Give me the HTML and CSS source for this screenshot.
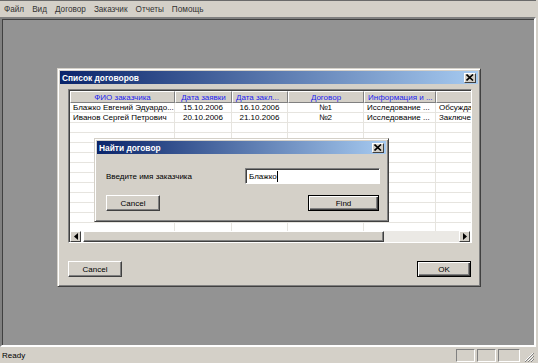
FILE: index.html
```html
<!DOCTYPE html>
<html lang="ru">
<head>
    <meta charset="UTF-8">
    <title>Договоры</title>
    <link rel="stylesheet" href="styles.css">
</head>
<body>
    <div class="app">
        <div class="topline"></div>
        <!-- Menu -->
        <ul class="menubar">
            <li>Файл</li>
            <li>Вид</li>
            <li>Договор</li>
            <li>Заказчик</li>
            <li>Отчеты</li>
            <li>Помощь</li>
        </ul>

        <!-- MDI client area -->
        <div class="client">
            <div class="window list-window">
                <div class="titlebar">
                    <span>Список договоров</span>
                    <span class="close-btn"><svg width="8" height="7" viewBox="0 0 8 7"><path d="M0.5 0.5 L7 6.5 M7 0.5 L0.5 6.5" stroke="#000" stroke-width="1.6"/></svg></span>
                </div>
                <div class="list-body">
                    <div class="listview">
                        <div class="grid">
                            <div class="row head">
                                <div class="cell c">ФИО заказчика</div>
                                <div class="cell c">Дата заявки</div>
                                <div class="cell">Дата закл...</div>
                                <div class="cell c">Договор</div>
                                <div class="cell">Информация и ...</div>
                                <div class="cell"></div>
                            </div>
                            <div class="row">
                                <div class="cell">Блажко Евгений Эдуардо...</div>
                                <div class="cell c">15.10.2006</div>
                                <div class="cell c">16.10.2006</div>
                                <div class="cell c">№1</div>
                                <div class="cell">Исследование ...</div>
                                <div class="cell">Обсужда</div>
                            </div>
                            <div class="row">
                                <div class="cell">Иванов Сергей Петрович</div>
                                <div class="cell c">20.10.2006</div>
                                <div class="cell c">21.10.2006</div>
                                <div class="cell c">№2</div>
                                <div class="cell">Исследование ...</div>
                                <div class="cell">Заключе</div>
                            </div>
                            <div class="row"><div class="cell"></div><div class="cell"></div><div class="cell"></div><div class="cell"></div><div class="cell"></div><div class="cell"></div></div>
                            <div class="row"><div class="cell"></div><div class="cell"></div><div class="cell"></div><div class="cell"></div><div class="cell"></div><div class="cell"></div></div>
                            <div class="row"><div class="cell"></div><div class="cell"></div><div class="cell"></div><div class="cell"></div><div class="cell"></div><div class="cell"></div></div>
                            <div class="row"><div class="cell"></div><div class="cell"></div><div class="cell"></div><div class="cell"></div><div class="cell"></div><div class="cell"></div></div>
                            <div class="row"><div class="cell"></div><div class="cell"></div><div class="cell"></div><div class="cell"></div><div class="cell"></div><div class="cell"></div></div>
                            <div class="row"><div class="cell"></div><div class="cell"></div><div class="cell"></div><div class="cell"></div><div class="cell"></div><div class="cell"></div></div>
                            <div class="row"><div class="cell"></div><div class="cell"></div><div class="cell"></div><div class="cell"></div><div class="cell"></div><div class="cell"></div></div>
                            <div class="row"><div class="cell"></div><div class="cell"></div><div class="cell"></div><div class="cell"></div><div class="cell"></div><div class="cell"></div></div>
                            <div class="row"><div class="cell"></div><div class="cell"></div><div class="cell"></div><div class="cell"></div><div class="cell"></div><div class="cell"></div></div>
                            <div class="row"><div class="cell"></div><div class="cell"></div><div class="cell"></div><div class="cell"></div><div class="cell"></div><div class="cell"></div></div>
                            <div class="row"><div class="cell"></div><div class="cell"></div><div class="cell"></div><div class="cell"></div><div class="cell"></div><div class="cell"></div></div>
                        </div>
                        <div class="hscroll">
                            <span class="arrow"><svg width="4" height="7" viewBox="0 0 4 7"><path d="M4 0 L0 3.5 L4 7 Z" fill="#000"/></svg></span>
                            <span class="thumb"></span>
                            <span class="track"></span>
                            <span class="arrow"><svg width="4" height="7" viewBox="0 0 4 7"><path d="M0 0 L4 3.5 L0 7 Z" fill="#000"/></svg></span>
                        </div>
                    </div>
                    <div class="buttons">
                        <button class="btn">Cancel</button>
                        <button class="btn default">OK</button>
                    </div>
                </div>
            </div>

            <div class="window find-window">
                <div class="titlebar">
                    <span>Найти договор</span>
                    <span class="close-btn"><svg width="8" height="7" viewBox="0 0 8 7"><path d="M0.5 0.5 L7 6.5 M7 0.5 L0.5 6.5" stroke="#000" stroke-width="1.6"/></svg></span>
                </div>
                <div class="find-body">
                    <div class="find-row">
                        <label for="customer">Введите имя заказчика</label>
                        <div class="textbox" id="customer">Блажко<span class="caret"></span></div>
                    </div>
                    <div class="buttons">
                        <button class="btn">Cancel</button>
                        <button class="btn default wide">Find</button>
                    </div>
                </div>
            </div>
        </div>

        <!-- Status bar -->
        <div class="statusbar">
            <span class="status-text">Ready</span>
            <span class="panel"></span>
            <span class="panel"></span>
            <span class="panel wide"></span>
            <svg class="grip" width="10" height="10" viewBox="0 0 10 10">
                <path d="M9 1 L1 9 M9 4 L4 9 M9 7 L7 9" stroke="#fff" stroke-width="1"/>
                <path d="M10 1 L1 10 M10 4 L4 10 M10 7 L7 10" stroke="#808080" stroke-width="1"/>
            </svg>
        </div>
    </div>
</body>
</html>
```

FILE: styles.css
```css
* {
    margin: 0;
    padding: 0;
    box-sizing: border-box;
}

body {
    font-family: "Liberation Sans", Arial, sans-serif;
    font-size: 8px;
    color: #000;
    background-color: #d4d0c8;
    overflow: hidden;
}

.app {
    width: 539px;
    height: 363px;
    display: flex;
    flex-direction: column;
    padding-right: 2px;
    border-right: 1px solid #fff;
}

.topline {
    height: 1px;
    background-color: #6a6a6a;
}

/* Menu */
.menubar {
    list-style: none;
    display: flex;
    height: 16px;
    align-items: center;
    padding-left: 4px;
    font-size: 8.2px;
    color: #333;
}

.menubar li {
    margin-right: 8px;
}

/* MDI area */
.client {
    position: relative;
    height: 330px;
    background-color: #939393;
    border: 2px solid;
    border-color: #808080 #fff #fff #808080;
    box-shadow: inset 1px 1px #404040;
}

/* Windows */
.window {
    position: absolute;
    background-color: #d4d0c8;
    border: 1px solid;
    border-color: #d4d0c8 #404040 #404040 #d4d0c8;
    box-shadow: inset 1px 1px #fff, inset -1px -1px #808080;
    padding: 2px;
}

.list-window {
    left: 55px;
    top: 49px;
    width: 424px;
    height: 219px;
}

.find-window {
    left: 92px;
    top: 119px;
    width: 295px;
    height: 84px;
}

.titlebar {
    height: 13px;
    display: flex;
    align-items: center;
    justify-content: space-between;
    padding: 0 2px 0 2px;
    background: linear-gradient(to right, #0a246a, #a6caf0);
    color: #fff;
    font-weight: bold;
    font-size: 8.4px;
}

.close-btn {
    width: 12px;
    height: 10px;
    display: flex;
    align-items: center;
    justify-content: center;
    background-color: #d4d0c8;
    border: 1px solid;
    border-color: #fff #404040 #404040 #fff;
}

/* List window content */
.list-body {
    padding: 5px 6px 0 8px;
}

.listview {
    height: 154px;
    background-color: #fff;
    border: 1px solid;
    border-color: #808080 #fff #fff #808080;
    box-shadow: inset 1px 1px #404040;
    padding: 1px 0 0 1px;
    display: flex;
    flex-direction: column;
    overflow: hidden;
}

.grid {
    flex: 1;
    overflow: hidden;
}

.row {
    display: grid;
    grid-template-columns: 105px 57px 56px 76px 72px 40px;
    height: 10px;
    line-height: 10px;
}

.row .cell {
    border-right: 1px solid #e6e4df;
    border-bottom: 1px solid #e6e4df;
    padding: 0 3px;
    white-space: nowrap;
    overflow: hidden;
}

.row .cell.c {
    text-align: center;
}

.row.head {
    height: 12px;
    line-height: 11px;
    color: #1c1cf0;
    background-color: #d4d0c8;
}

.row.head .cell {
    border-top: 1px solid #fff;
    border-left: 1px solid #fff;
    border-right: 1px solid #808080;
    border-bottom: 1px solid #808080;
}

.hscroll {
    height: 11px;
    display: flex;
    margin-right: 1px;
}

.hscroll .arrow {
    width: 11px;
    display: flex;
    align-items: center;
    justify-content: center;
    background-color: #d4d0c8;
    border: 1px solid;
    border-color: #fff #404040 #404040 #fff;
}

.hscroll .thumb {
    width: 301px;
    margin-left: 2px;
    background-color: #d4d0c8;
    border: 1px solid;
    border-color: #fff #404040 #404040 #fff;
    box-shadow: inset -1px -1px #808080;
}

.hscroll .track {
    flex: 1;
    background-color: #ebe9e5;
}

.buttons {
    display: flex;
    justify-content: space-between;
}

.list-body .buttons {
    margin-top: 18px;
    padding-right: 1px;
}

.btn {
    font-family: "Liberation Sans", Arial, sans-serif;
    font-size: 8px;
    width: 54px;
    height: 16px;
    background-color: #d4d0c8;
    border: 1px solid;
    border-color: #fff #404040 #404040 #fff;
    box-shadow: inset -1px -1px #808080;
    color: #000;
}

.btn.default {
    border-color: #000;
    box-shadow: inset 1px 1px #fff, inset -1px -1px #404040, inset -2px -2px #808080;
}

.btn.wide {
    width: 71px;
}

/* Find window content */
.find-body {
    padding: 14px 6px 0 9px;
}

.find-row {
    display: flex;
    align-items: center;
    justify-content: space-between;
    height: 16px;
}

.textbox {
    width: 135px;
    height: 16px;
    background-color: #fff;
    border: 1px solid;
    border-color: #808080 #fff #fff #808080;
    box-shadow: inset 1px 1px #404040;
    padding: 2px 0 0 3px;
    display: flex;
    align-items: flex-start;
    line-height: 11px;
}

.caret {
    width: 1px;
    height: 11px;
    background-color: #000;
}

.find-body .buttons {
    margin-top: 11px;
    padding-right: 1px;
}

/* Status bar */
.statusbar {
    flex: 1;
    display: flex;
    align-items: center;
    padding: 1px 0 0 2px;
    gap: 2px;
}

.status-text {
    flex: 1;
}

.panel {
    width: 19px;
    height: 13px;
    border: 1px solid;
    border-color: #808080 #fff #fff #808080;
}

.panel.wide {
    width: 22px;
}

.grip {
    margin: 3px 2px 0 2px;
}
```
